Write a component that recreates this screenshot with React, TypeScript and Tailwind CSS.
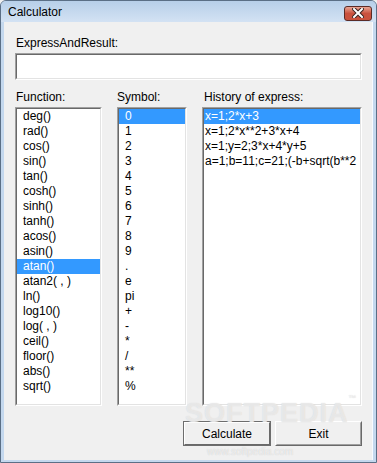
import React from "react";

const functions = [
  "deg()", "rad()", "cos()", "sin()", "tan()", "cosh()", "sinh()", "tanh()",
  "acos()", "asin()", "atan()", "atan2( , )", "ln()", "log10()", "log( , )",
  "ceil()", "floor()", "abs()", "sqrt()",
];

const symbols = ["0", "1", "2", "3", "4", "5", "6", "7", "8", "9", ".", "e", "pi", "+", "-", "*", "/", "**", "%"];

const history = [
  "x=1;2*x+3",
  "x=1;2*x**2+3*x+4",
  "x=1;y=2;3*x+4*y+5",
  "a=1;b=11;c=21;(-b+sqrt(b**2",
];

function Sunken({ className, children }: { className?: string; children?: React.ReactNode }) {
  return (
    <div className={"border border-t-[#a0a0a0] border-l-[#a0a0a0] border-r-white border-b-white " + (className ?? "")}>
      <div className="w-full h-full border border-t-[#696969] border-l-[#696969] border-r-[#e3e3e3] border-b-[#e3e3e3] bg-white overflow-hidden">
        {children}
      </div>
    </div>
  );
}

function ListBox({
  items, selected, width, pad,
}: { items: string[]; selected: number; width: string; pad: string }) {
  return (
    <Sunken className={width + " h-[299px]"}>
      <ul>
        {items.map((it, i) => (
          <li
            key={it}
            className={
              "h-[15px] leading-[15px] whitespace-nowrap " + pad + " " +
              (i === selected ? "bg-[#3399ff] text-white" : "text-black")
            }
          >
            {it}
          </li>
        ))}
      </ul>
    </Sunken>
  );
}

function WinButton({ label, isDefault }: { label: string; isDefault?: boolean }) {
  return (
    <button
      className={
        "h-[25px] border " +
        (isDefault ? "w-[88px] border-[#6d6d6d]" : "w-[87px] border-transparent border-t-white border-l-white border-r-[#696969] border-b-[#696969]")
      }
    >
      <div
        className={
          "w-full h-full flex items-center justify-center border bg-[#f0f0f0] " +
          (isDefault
            ? "border-t-white border-l-white border-r-[#696969] border-b-[#696969]"
            : "border-t-[#f0f0f0] border-l-[#f0f0f0] border-r-[#a0a0a0] border-b-[#a0a0a0]")
        }
      >
        {label}
      </div>
    </button>
  );
}

export default function App() {
  return (
    <div className="w-[377px] h-[463px] bg-[#f0f0f0] font-['Liberation_Sans',Arial,sans-serif] text-[12px] text-black">
      <div className="relative w-full h-full flex flex-col border border-[#5b6f86] rounded-t-[6px] bg-[#c4d8ee] overflow-hidden">
        {/* title bar */}
        <div className="h-[21px] shrink-0 flex items-center justify-between pl-[7px] pr-[4px] bg-gradient-to-b from-[#b7cfe9] to-[#d3e2f3]">
          <span className="text-[12px] text-black">Calculator</span>
          <div className="w-[28px] h-[15px] mt-[3px] rounded-[3px] border border-[#5a2b26] bg-gradient-to-b from-[#e8a493] via-[#c9513e] to-[#c9523d] flex items-center justify-center">
            <svg width="12" height="10" viewBox="0 0 12 10">
              <path d="M2 1 L10 9 M10 1 L2 9" stroke="#3b2320" strokeWidth="4" strokeLinecap="square" />
              <path d="M2 1 L10 9 M10 1 L2 9" stroke="#ffffff" strokeWidth="2" strokeLinecap="square" />
            </svg>
          </div>
        </div>

        {/* body */}
        <div className="flex-1 ml-[3px] mb-[2px] mr-[3px] border-r border-r-[#f8fbff] bg-[#f0f0f0] pl-[11px] pr-[10px] pt-[14px] flex flex-col">
          <div className="h-[15px] leading-[15px] pl-[1px]">ExpressAndResult:</div>
          <Sunken className="mt-[2px] w-[347px] h-[27px]" />

          <div className="mt-[10px] flex gap-[15px]">
            <div className="flex flex-col">
              <div className="h-[15px] leading-[15px] pl-[1px] mb-[2px]">Function:</div>
              <ListBox items={functions} selected={10} width="w-[87px]" pad="pl-[6px]" />
            </div>
            <div className="flex flex-col">
              <div className="h-[15px] leading-[15px] mb-[2px]">Symbol:</div>
              <ListBox items={symbols} selected={0} width="w-[70px]" pad="pl-[6px]" />
            </div>
            <div className="flex flex-col">
              <div className="h-[15px] leading-[15px] pl-[2px] mb-[2px]">History of express:</div>
              <ListBox items={history} selected={0} width="w-[160px]" pad="pl-[1px]" />
            </div>
          </div>

          <div className="mt-[15px] flex justify-end gap-[4px]">
            <WinButton label="Calculate" isDefault />
            <WinButton label="Exit" />
          </div>
        </div>

        {/* watermark */}
        <div className="absolute left-[184px] top-[392px] pointer-events-none select-none text-[27px] font-bold tracking-[1px] text-white/50 [text-shadow:0_0_1px_#cfcfcf]">
          SOFTPEDIA<span className="text-[8px] align-top">™</span>
        </div>
        <div className="absolute left-[206px] top-[443px] pointer-events-none select-none text-[10px] text-white/60 [text-shadow:0_0_1px_#c4c4c4]">
          www.softpedia.com
        </div>
      </div>
    </div>
  );
}
